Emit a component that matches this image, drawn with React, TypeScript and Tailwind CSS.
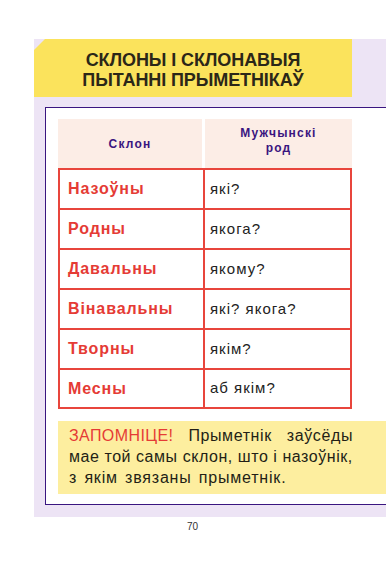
import React from 'react';

const rows = [
  { kase: 'Назоўны', q: 'які?' },
  { kase: 'Родны', q: 'якога?' },
  { kase: 'Давальны', q: 'якому?' },
  { kase: 'Вінавальны', q: 'які? якога?' },
  { kase: 'Творны', q: 'якім?' },
  { kase: 'Месны', q: 'аб якім?' },
];

export default function App() {
  return (
    <div className="w-[386px] h-[567px] bg-white overflow-hidden font-['Liberation_Sans',Arial,sans-serif]">
      <div className="ml-[34px] mt-[39px] h-[478px] bg-[#ede4f5] flex flex-col">
        {/* title plate */}
        <div className="w-[318px] h-[58px] bg-[#fbe35c] [clip-path:polygon(11px_0,100%_0,100%_100%,0_100%,0_11px)] flex flex-col items-center justify-center pt-[3px]">
          <p className="text-[18px] leading-[20px] font-bold text-[#2b2718] text-center tracking-[-0.1px]">
            СКЛОНЫ І СКЛОНАВЫЯ
            <br />
            ПЫТАННІ ПРЫМЕТНІКАЎ
          </p>
        </div>

        <div className="ml-[11px] mt-[10px] h-[398px] bg-white border border-r-0 border-[#3a1580] pl-[12px] pt-[11px]">
          {/* table */}
          <div className="w-[294px]">
            <div className="flex h-[49px] gap-[3px]">
              <div className="w-[144px] bg-[#fcede6] flex items-center justify-center">
                <span className="text-[12px] font-bold text-[#3a1580] tracking-[1.2px]">Склон</span>
              </div>
              <div className="flex-1 bg-[#fcede6] flex items-center justify-center pb-[6px]">
                <span className="text-[12px] leading-[15px] font-bold text-[#3a1580] text-center tracking-[1.2px]">
                  Мужчынскі
                  <br />
                  род
                </span>
              </div>
            </div>
            <div className="border-2 border-[#e8453c]">
              {rows.map((r, i) => (
                <div
                  key={r.kase}
                  className={`flex ${
                    i === 0 ? 'h-[38px]' : i === rows.length - 1 ? 'h-[39px] border-t-2 border-[#e8453c]' : 'h-[40px] border-t-2 border-[#e8453c]'
                  }`}
                >
                  <div className="w-[145px] border-r-2 border-[#e8453c] flex items-center pl-[8px]">
                    <span className="text-[16px] font-bold text-[#e53b35] tracking-[0.9px]">{r.kase}</span>
                  </div>
                  <div className="flex-1 flex items-center pl-[5px]">
                    <span className="text-[15px] text-[#222] tracking-[1px]">{r.q}</span>
                  </div>
                </div>
              ))}
            </div>
          </div>

          {/* note */}
          <div className="mt-[12px] h-[73px] bg-[#fdee9f] pl-[11px] pt-[4px]">
            <div className="w-[284px] text-[16px] leading-[21px] text-[#231f16]">
              <div className="flex justify-between tracking-[0.6px]">
                <span className="text-[#e53b35] tracking-[0.4px]">ЗАПОМНІЦЕ!</span>
                <span>Прыметнік</span>
                <span>заўсёды</span>
              </div>
              <div className="tracking-[0.55px]">мае той самы склон, што і назоўнік,</div>
              <div className="tracking-[0.8px] [word-spacing:2px]">з якім звязаны прыметнік.</div>
            </div>
          </div>
        </div>
      </div>
      <p className="text-center text-[10px] text-[#333] mt-[2px] pr-[1px]">70</p>
    </div>
  );
}
